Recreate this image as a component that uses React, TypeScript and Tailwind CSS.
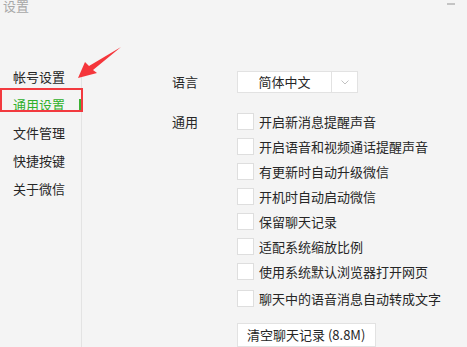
import React from 'react';

const navItems = ['帐号设置', '通用设置', '文件管理', '快捷按键', '关于微信'];

const options = [
  '开启新消息提醒声音',
  '开启语音和视频通话提醒声音',
  '有更新时自动升级微信',
  '开机时自动启动微信',
  '保留聊天记录',
  '适配系统缩放比例',
  '使用系统默认浏览器打开网页',
];

const Checkbox: React.FC<{ label: string; className?: string }> = ({ label, className = '' }) => (
  <div className={`flex h-[25px] items-center ${className}`}>
    <span className="h-[17px] w-[17px] shrink-0 border border-[#dedede] bg-white" />
    <span className="ml-[5px] whitespace-nowrap">{label}</span>
  </div>
);

const App: React.FC = () => {
  return (
    <div
      className="relative h-[347px] w-[467px] overflow-hidden bg-[#f4f4f4] text-[13px] text-[#262626]"
      style={{ fontFamily: '"Microsoft YaHei", "Noto Sans CJK SC", "Noto Sans", sans-serif' }}
    >
      {/* Title bar */}
      <div className="h-[14px] pl-[3px] text-[13px] leading-[12px] text-[#a8a8a8]">设置</div>
      <div className="absolute right-[12px] top-[3px] h-[2px] w-[8px] bg-[#c4c4c4]" />

      <div className="flex h-[333px]">
        {/* Sidebar */}
        <div className="relative z-10 mt-[49px] w-[81px]">
          {navItems.map((item, i) => (
            <div
              key={item}
              className={`relative flex h-[28px] items-center pl-[13px] ${i === 1 ? 'text-[#2fb02a]' : ''}`}
            >
              {item}
              {i === 1 && (
                <>
                  <span className="absolute right-0 top-[8px] h-[11px] w-[2px] bg-[#3cb034]" />
                  <span className="absolute left-0 top-[-3px] h-[24px] w-[83px] border-2 border-[#f23a3f]" />
                </>
              )}
            </div>
          ))}
        </div>
        <div className="mt-[62px] w-px bg-[#e3e3e3]" />

        {/* Content */}
        <div className="ml-[90px] pt-[57px]">
          <div className="flex h-[22px] items-center">
            <span className="w-[65px]">语言</span>
            <div className="flex h-[22px] w-[121px] border border-[#e2e2e2] bg-white">
              <div className="flex w-[94px] items-center justify-center border-r border-[#e2e2e2]">简体中文</div>
              <div className="flex flex-1 items-center justify-center">
                <svg width="8" height="5" viewBox="0 0 8 5" fill="none">
                  <path d="M0.5 0.5 L4 4 L7.5 0.5" stroke="#c2c2c2" strokeWidth="1" />
                </svg>
              </div>
            </div>
          </div>

          <div className="mt-[16px] flex">
            <div className="flex h-[25px] w-[65px] items-center">通用</div>
            <div className="flex flex-col">
              {options.map((o) => (
                <Checkbox key={o} label={o} />
              ))}
              <Checkbox label="聊天中的语音消息自动转成文字" className="mt-[2px]" />
              <button className="mt-[12px] h-[24px] w-[139px] border border-[#e2e2e2] bg-white px-[9px] text-left text-[13px] text-[#262626]">
                清空聊天记录 (8.8M)
              </button>
            </div>
          </div>
        </div>
      </div>

      {/* Annotation arrow */}
      <svg className="pointer-events-none absolute left-0 top-0 z-20" width="140" height="90" viewBox="0 0 140 90">
        <polygon points="121,47 93,70 97,73 78,78 85,62 89,66" fill="#f5363b" />
      </svg>
    </div>
  );
};

export default App;
